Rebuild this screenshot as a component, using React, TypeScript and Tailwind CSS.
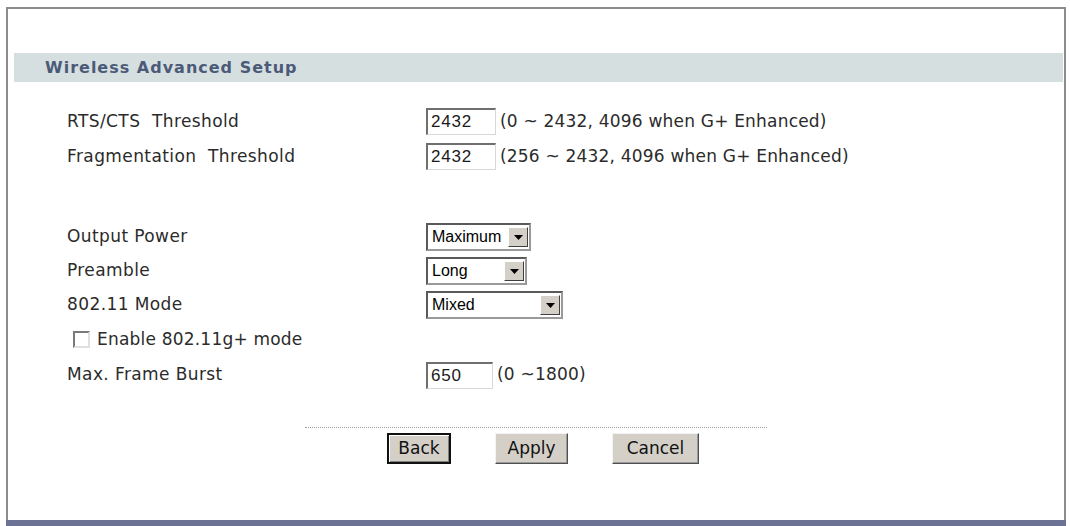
import React from 'react';

const verdana = { fontFamily: '"DejaVu Sans", Verdana, sans-serif' };
const arial = { fontFamily: '"Liberation Sans", Arial, sans-serif' };

const TextBox: React.FC<{ value: string; width: string }> = ({ value, width }) => (
  <div
    className={`${width} h-[27px] flex items-center pl-[3px] bg-white border-t-2 border-l-2 border-t-[#6f6f6f] border-l-[#6f6f6f] border-b border-r border-b-[#d8d8d8] border-r-[#d8d8d8] text-[17px] tracking-[0.8px] text-[#1a1a1a]`}
    style={arial}
  >
    {value}
  </div>
);

const Select: React.FC<{ value: string; width: string }> = ({ value, width }) => (
  <div
    className={`${width} h-[28px] flex items-stretch bg-white border-2 border-t-[#5a5a5a] border-l-[#5a5a5a] border-b-[#9a9a9a] border-r-[#9a9a9a] text-[16px] text-black`}
    style={arial}
  >
    <div className="flex-1 flex items-center pl-[4px]">{value}</div>
    <div className="w-[20px] my-[2px] mr-[1px] bg-[#d4d0c8] border border-t-white border-l-white border-b-[#404040] border-r-[#404040] flex items-center justify-center">
      <svg width="9" height="5" viewBox="0 0 9 5">
        <path d="M0 0H9L4.5 5Z" fill="#000" />
      </svg>
    </div>
  </div>
);

const Button: React.FC<{ label: string; width: string; focused?: boolean }> = ({ label, width, focused }) => (
  <div
    className={`${width} h-[31px] flex items-center justify-center bg-[#d4d0c8] text-[17px] text-[#111] ${
      focused
        ? 'border-2 border-[#111] shadow-[inset_1px_1px_0_#fff,inset_-1px_-1px_0_#808080]'
        : 'border border-t-[#f4f4f4] border-l-[#f4f4f4] border-b-[#505050] border-r-[#505050] shadow-[inset_-1px_-1px_0_#9a9a9a]'
    }`}
    style={verdana}
  >
    {label}
  </div>
);

const Row: React.FC<{ label: React.ReactNode; h: string; children?: React.ReactNode }> = ({ label, h, children }) => (
  <div className={`${h} grid grid-cols-[359px_1fr] items-center pl-[59px]`}>
    <div className="text-[17px] tracking-[0.4px] text-[#2b2b2b] whitespace-pre" style={verdana}>
      {label}
    </div>
    <div className="flex items-center gap-[4px]">{children}</div>
  </div>
);

const Hint: React.FC<{ children: React.ReactNode }> = ({ children }) => (
  <span className="text-[17px] tracking-[0.2px] text-[#2b2b2b] whitespace-pre" style={verdana}>
    {children}
  </span>
);

export default function App() {
  return (
    <div className="w-[1070px] h-[526px] bg-white flex flex-col pt-[7px] pl-[6px] pr-[4px] overflow-hidden">
      <div className="flex-1 flex flex-col border-t-2 border-l-2 border-r-2 border-[#8c8c8c]">
        <div className="mt-[44px] ml-[6px] mr-[1px] h-[29px] bg-[#d6dfdf] flex items-center pl-[31px]">
          <span className="text-[16px] font-bold text-[#4b5a78] tracking-[1px]" style={verdana}>
            Wireless Advanced Setup
          </span>
        </div>

        <div className="mt-[22px]">
          <Row label="RTS/CTS  Threshold" h="h-[35px]">
            <TextBox value="2432" width="w-[70px]" />
            <Hint>(0 ~ 2432, 4096 when G+ Enhanced)</Hint>
          </Row>
          <Row label="Fragmentation  Threshold" h="h-[35px]">
            <TextBox value="2432" width="w-[70px]" />
            <Hint>(256 ~ 2432, 4096 when G+ Enhanced)</Hint>
          </Row>
        </div>

        <div className="mt-[46px]">
          <Row label="Output Power" h="h-[34px]">
            <Select value="Maximum" width="w-[105px]" />
          </Row>
          <Row label="Preamble" h="h-[34px]">
            <Select value="Long" width="w-[101px]" />
          </Row>
          <Row label="802.11 Mode" h="h-[34px]">
            <Select value="Mixed" width="w-[137px]" />
          </Row>
          <div className="h-[35px] flex items-center pl-[65px] gap-[7px]">
            <div className="w-[17px] h-[17px] bg-white border-2 border-t-[#7a7a7a] border-l-[#7a7a7a] border-b-[#e0e0e0] border-r-[#e0e0e0]" />
            <span className="text-[17px] tracking-[0.2px] text-[#2b2b2b]" style={verdana}>
              Enable 802.11g+ mode
            </span>
          </div>
          <Row label="Max. Frame Burst" h="h-[36px]">
            <TextBox value="650" width="w-[67px]" />
            <Hint>(0 ~1800)</Hint>
          </Row>
        </div>

        <div className="mt-[34px] mx-auto w-[462px] border-t border-dotted border-[#9a9a9a]" />

        <div className="mt-[5px] flex pl-[379px]">
          <Button label="Back" width="w-[64px]" focused />
          <div className="w-[44px]" />
          <Button label="Apply" width="w-[73px]" />
          <div className="w-[44px]" />
          <Button label="Cancel" width="w-[87px]" />
        </div>
      </div>
      <div className="h-[6px] bg-[#6c7294]" />
    </div>
  );
}
